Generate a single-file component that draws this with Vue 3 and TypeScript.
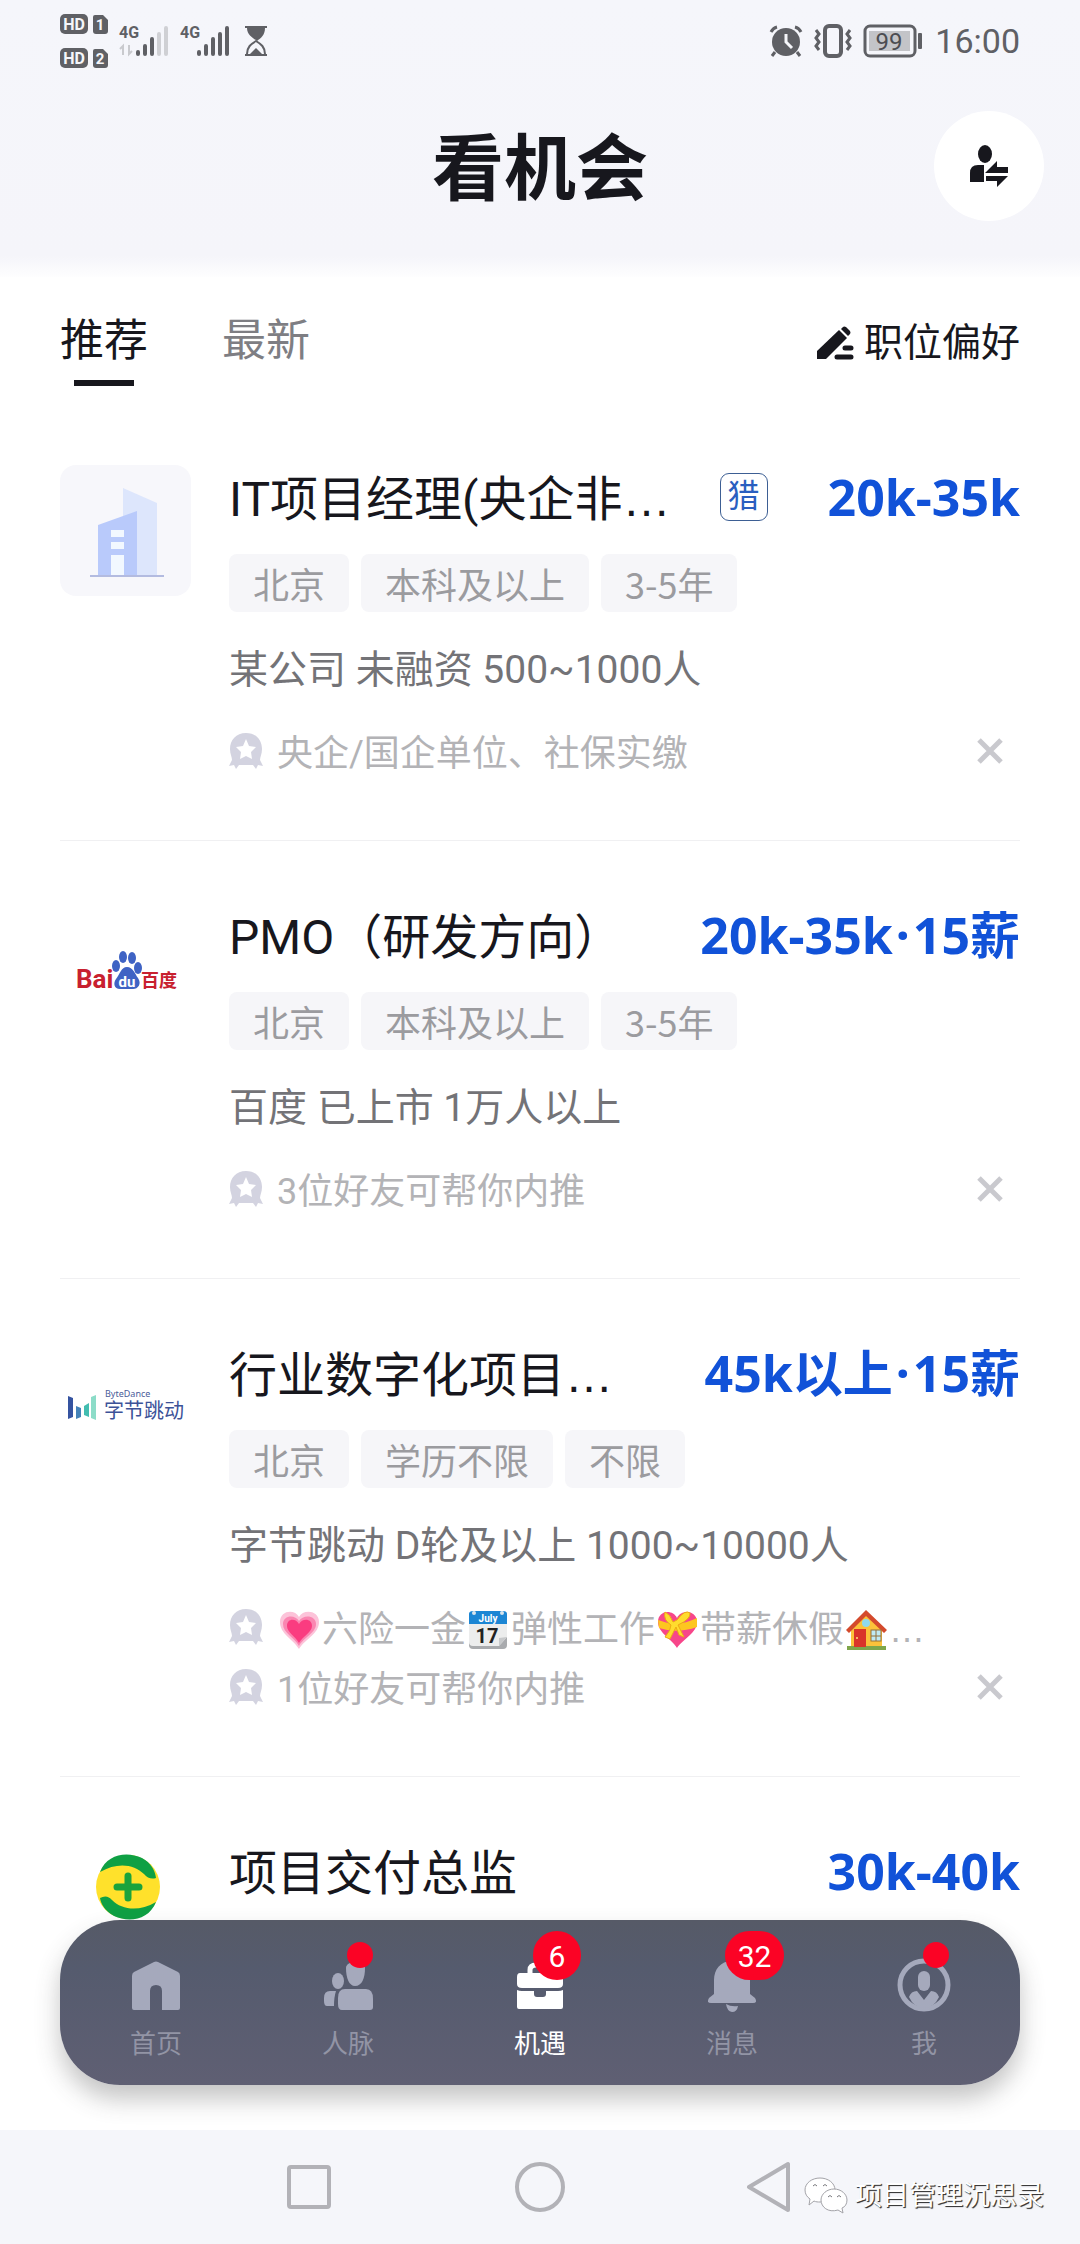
<script setup lang="ts">
type Logo = 'building' | 'baidu' | 'bytedance' | 'plus'
type Emoji = 'heart' | 'calendar' | 'gift' | 'house'
interface Part { text?: string; emoji?: Emoji; dots?: boolean }
interface Job {
  logo: Logo
  title: string
  cut?: boolean
  headhunter?: boolean
  salary: string
  months?: string
  tags: string[]
  company: string
  notes: Part[][]
}
interface NavItem { key: string; label: string; badge?: string; dot?: boolean; active?: boolean }

const jobs: Job[] = [
  {
    logo: 'building', title: 'IT项目经理(央企非', cut: true, headhunter: true, salary: '20k-35k',
    tags: ['北京', '本科及以上', '3-5年'], company: '某公司 未融资 500~1000人',
    notes: [[{ text: '央企/国企单位、社保实缴' }]],
  },
  {
    logo: 'baidu', title: 'PMO（研发方向）', salary: '20k-35k', months: '15薪',
    tags: ['北京', '本科及以上', '3-5年'], company: '百度 已上市 1万人以上',
    notes: [[{ text: '3位好友可帮你内推' }]],
  },
  {
    logo: 'bytedance', title: '行业数字化项目', cut: true, salary: '45k以上', months: '15薪',
    tags: ['北京', '学历不限', '不限'], company: '字节跳动 D轮及以上 1000~10000人',
    notes: [
      [
        { emoji: 'heart' }, { text: '六险一金' }, { emoji: 'calendar' }, { text: '弹性工作' },
        { emoji: 'gift' }, { text: '带薪休假' }, { emoji: 'house' }, { dots: true },
      ],
      [{ text: '1位好友可帮你内推' }],
    ],
  },
  { logo: 'plus', title: '项目交付总监', salary: '30k-40k', tags: [], company: '', notes: [] },
]

const nav: NavItem[] = [
  { key: 'home', label: '首页' },
  { key: 'people', label: '人脉', dot: true },
  { key: 'jobs', label: '机遇', badge: '6', active: true },
  { key: 'bell', label: '消息', badge: '32' },
  { key: 'me', label: '我', dot: true },
]
</script>

<template>
  <div class="page">
    <header class="top">
      <div class="status">
        <div class="status-side">
          <div class="sims">
            <svg v-for="n in 2" :key="n" width="48" height="24" viewBox="0 -2 48 24">
              <rect width="28" height="20" rx="5" fill="#5f6065" />
              <text x="14" y="16" text-anchor="middle" class="glyph" font-size="16" fill="#f5f6fa">HD</text>
              <path d="M35 1H43L48 6V17Q48 20 45 20H36Q33 20 33 17V3Q33 1 35 1Z" fill="#5f6065" />
              <text x="40" y="16" text-anchor="middle" class="glyph" font-size="15" fill="#f5f6fa">{{ n }}</text>
            </svg>
          </div>
          <svg class="signal" width="50" height="40" viewBox="0 -4 50 40">
            <text x="0" y="13" class="glyph" font-size="16" fill="#5f6065">4G</text>
            <path d="M4 30V21L1 24M10 20V29L13 26" fill="none" stroke="#c9cace" stroke-width="2" />
            <g stroke-width="4" stroke-linecap="round">
              <path d="M19 27V29M26 21V29M33 14V29" stroke="#5f6065" />
              <path d="M40 9V29M47 3V29" stroke="#cfd0d4" />
            </g>
          </svg>
          <svg class="signal" width="50" height="40" viewBox="0 -4 50 40">
            <text x="0" y="13" class="glyph" font-size="16" fill="#5f6065">4G</text>
            <path d="M19 27V29M26 21V29M33 14V29M40 9V29M47 3V29" stroke="#5f6065" stroke-width="4" stroke-linecap="round" />
          </svg>
          <svg class="glass" width="24" height="32" viewBox="0 0 24 32">
            <path d="M1 2H23M1 30H23" stroke="#5f6065" stroke-width="2" />
            <path d="M3 3H21C21 10 17 13 13 16C9 13 3 10 3 3Z" fill="#5f6065" />
            <path d="M3 29C3 22 7 19 12 16C17 19 21 22 21 29" fill="none" stroke="#5f6065" stroke-width="2" />
            <path d="M6 29L12 23L18 29Z" fill="#5f6065" />
          </svg>
        </div>
        <div class="status-side">
          <svg width="34" height="32" viewBox="0 0 34 32">
            <circle cx="17" cy="17" r="14" fill="#5f6065" />
            <path d="M2 7Q4 3 8 2M32 7Q30 3 26 2M6 27L3 31M28 27L31 31" stroke="#5f6065" stroke-width="3" fill="none" />
            <path d="M17 9V17L23 23" stroke="#f5f6fa" stroke-width="3" fill="none" />
          </svg>
          <svg class="vibrate" width="38" height="34" viewBox="0 0 38 34">
            <rect x="11" y="2" width="16" height="30" rx="4" fill="none" stroke="#5f6065" stroke-width="4" />
            <path d="M2 6L5 10L2 14L5 18L2 22L5 26M36 6L33 10L36 14L33 18L36 22L33 26" fill="none" stroke="#5f6065" stroke-width="3" />
          </svg>
          <svg width="60" height="34" viewBox="0 0 60 34">
            <rect x="2" y="2" width="50" height="30" rx="5" fill="none" stroke="#5f6065" stroke-width="3" />
            <rect x="6" y="7" width="41" height="20" fill="#c3c4c8" />
            <rect x="55" y="9" width="4" height="16" rx="1" fill="#5f6065" />
            <text x="26" y="26" text-anchor="middle" class="thin" font-size="24" fill="#4c4d52">99</text>
          </svg>
          <span class="clock">16:00</span>
        </div>
      </div>
      <div class="heading">
        <h1>看机会</h1>
        <button class="switch" aria-label="切换身份">
          <svg width="40" height="44" viewBox="0 0 40 44">
            <ellipse cx="16" cy="10" rx="7" ry="9" fill="#17171d" />
            <path d="M1 38V29Q1 21 9 21H15V38Z" fill="#17171d" />
            <path d="M16 29L28 17V23H39V29Z" fill="#17171d" />
            <path d="M17 32H39L28 43V37H17Z" fill="#17171d" />
          </svg>
        </button>
      </div>
    </header>

    <nav class="tabs">
      <button class="tab on">推荐</button>
      <button class="tab">最新</button>
      <button class="prefer">
        <svg width="36" height="34" viewBox="0 0 36 34">
          <path d="M0 33V25L22 4L30 12L9 33Z" fill="#17171d" />
          <path d="M24 3L26 1Q27 0 29 1L33 5Q34 7 33 8L31 10Z" fill="#17171d" />
          <path d="M28 22H34M20 31H34" stroke="#17171d" stroke-width="5" stroke-linecap="round" />
        </svg>
        职位偏好
      </button>
    </nav>

    <main class="list">
      <article v-for="job in jobs" :key="job.title" class="job">
        <div class="tile" :class="{ tinted: job.logo === 'building' }">
          <svg v-if="job.logo === 'building'" width="131" height="131" viewBox="0 0 131 131">
            <path d="M63 23L97 38V111H63Z" fill="#dde6fc" />
            <path d="M38 60L77 46V111H38Z" fill="#b9cafb" />
            <path d="M51 65H64V72H51ZM51 77H64V84H51ZM51 90H64V111H51Z" fill="#f2f8ff" />
            <path d="M30 111H104" stroke="#b3bbe0" stroke-width="2" />
          </svg>
          <svg v-else-if="job.logo === 'baidu'" width="131" height="131" viewBox="0 0 131 131">
            <text x="16" y="85" font-size="26" class="glyph" fill="#c8202f">Bai</text>
            <g fill="#3f63c4">
              <ellipse cx="63" cy="54" rx="4" ry="6" />
              <ellipse cx="72" cy="55" rx="4" ry="6" />
              <ellipse cx="56" cy="63" rx="4" ry="6" />
              <ellipse cx="78" cy="65" rx="4" ry="6" />
              <path d="M67 64C73 64 75 71 78 75C82 81 78 86 73 86H60C54 86 53 80 56 76C60 71 61 64 67 64Z" />
            </g>
            <text x="67" y="84" text-anchor="middle" font-size="15" class="glyph" fill="#ffffff">du</text>
            <text x="81" y="84" font-size="18" class="brand" fill="#c8202f">百度</text>
          </svg>
          <svg v-else-if="job.logo === 'bytedance'" width="131" height="131" viewBox="0 0 131 131">
            <path d="M8 55L13 57V76L8 78Z" fill="#3553a0" />
            <path d="M16 65L21 67V76L16 78Z" fill="#4482b8" />
            <path d="M24 65L29 62V76L24 74Z" fill="#42bdb0" />
            <path d="M31 56L36 54V79L31 77Z" fill="#8cdcc8" />
            <text x="45" y="56" font-size="9" class="latin" fill="#4a5c99">ByteDance</text>
            <text x="44" y="77" font-size="20" class="latin" fill="#3c5298">字节跳动</text>
          </svg>
          <svg v-else width="131" height="131" viewBox="0 0 131 131">
            <circle cx="68" cy="48" r="32" fill="#ffe12b" />
            <path d="M40 33C47 15 67 12 82 19C91 24 95 31 96 39Q89 41 84 35C74 25 57 23 40 33Z" fill="#0fa044" />
            <path d="M96 63C89 81 69 84 54 77C45 72 41 65 40 59Q47 55 52 61C62 71 79 73 96 63Z" fill="#0fa044" />
            <path d="M68 37V59M57 48H79" stroke="#1aa33c" stroke-width="7" stroke-linecap="round" />
          </svg>
        </div>
        <div class="body">
          <div class="row">
            <h2>{{ job.title }}<span v-if="job.cut" class="dots">…</span></h2>
            <span v-if="job.headhunter" class="hunter">猎</span>
            <strong class="salary">{{ job.salary }}<template v-if="job.months"><span class="mid">·</span>{{ job.months }}</template></strong>
          </div>
          <template v-if="job.tags.length">
            <ul class="tags">
              <li v-for="tag in job.tags" :key="tag">{{ tag }}</li>
            </ul>
            <p class="company">{{ job.company }}</p>
            <div class="foot">
              <div class="notes">
                <p v-for="(note, i) in job.notes" :key="i" class="note">
                  <svg class="medal" width="34" height="36" viewBox="0 0 34 36">
                    <path d="M17 0C27 0 33 7 33 16C33 21 31 24 31 27L34 33L29 32L27 36L24 32H10L7 36L5 32L0 33L3 27C3 24 1 21 1 16C1 7 7 0 17 0Z" fill="#d3d3e0" />
                    <path d="M17 6L20 13L27 14L22 19L23 26L17 23L11 26L12 19L7 14L14 13Z" fill="#ffffff" />
                  </svg>
                  <template v-for="(part, j) in note" :key="j">
                    <span v-if="part.text">{{ part.text }}</span>
                    <span v-else-if="part.dots" class="dots">…</span>
                    <svg v-else class="emoji" width="41" height="40" viewBox="0 0 41 40" role="img">
                      <g v-if="part.emoji === 'heart'">
                        <path d="M20 39C14 29 1 24 1 12C1 0 16 -1 20 7C24 -1 40 0 40 12C40 24 26 29 20 39Z" fill="#fcc3d9" />
                        <path d="M20 36C15 27 4 23 4 14C4 5 16 4 20 11C24 4 37 5 37 14C37 23 25 27 20 36Z" fill="#fa86b1" />
                        <path d="M20 33C16 26 8 22 8 16C8 8 17 8 20 14C23 8 33 8 33 16C33 22 24 26 20 33Z" fill="#fa3c80" />
                      </g>
                      <g v-else-if="part.emoji === 'calendar'">
                        <rect x="1" y="2" width="38" height="37" rx="4" fill="#a9abae" />
                        <path d="M1 14H39V27L31 36H5Q1 36 1 32Z" fill="#eceded" />
                        <path d="M39 27L31 36V28Z" fill="#c7c9cb" />
                        <path d="M1 14V4Q1 1 5 1H35Q39 1 39 4V14Z" fill="#1c86d4" />
                        <circle cx="6" cy="3" r="2" fill="#d8e4ec" />
                        <circle cx="34" cy="3" r="2" fill="#d8e4ec" />
                        <text x="20" y="12" text-anchor="middle" font-size="10" class="glyph" fill="#ffffff">July</text>
                        <text x="19" y="33" text-anchor="middle" font-size="20" class="glyph" fill="#222222">17</text>
                      </g>
                      <g v-else-if="part.emoji === 'gift'">
                        <path d="M20 38C15 29 1 23 1 12C1 0 16 -1 20 8C24 -1 40 0 40 12C40 23 26 29 20 38Z" fill="#f7468a" />
                        <path d="M1 10Q20 18 40 8V17Q20 24 2 18Z" fill="#fdc61f" />
                        <path d="M8 2Q13 4 16 12L20 10Q28 -1 33 3Q34 9 21 15L27 27L22 25L19 17L13 29L8 27Q14 20 14 15Q6 10 8 2Z" fill="#ffdc2e" stroke="#eda915" stroke-width="1" />
                      </g>
                      <g v-else>
                        <path d="M5 17L20 3L36 17V37H5Z" fill="#fcc23a" />
                        <path d="M20 0L41 20L38 23L20 6L3 23L0 20Z" fill="#d44a2c" />
                        <path d="M1 36H40V40H1Z" fill="#7ea64b" />
                        <rect x="8" y="19" width="12" height="18" fill="#d9342a" />
                        <rect x="25" y="20" width="10" height="11" fill="#bfeaf5" stroke="#94713a" stroke-width="1" />
                        <path d="M30 20V31M25 26H35" stroke="#94713a" stroke-width="1" />
                        <circle cx="20" cy="13" r="4" fill="#8fd9ee" />
                        <circle cx="11" cy="28" r="1" fill="#ffe27a" />
                      </g>
                    </svg>
                  </template>
                </p>
              </div>
              <button class="close" aria-label="不感兴趣">
                <svg width="26" height="26" viewBox="0 0 26 26">
                  <path d="M2 2L24 24M24 2L2 24" stroke="#c9c9ce" stroke-width="5" />
                </svg>
              </button>
            </div>
          </template>
        </div>
      </article>
    </main>

    <nav class="dock">
      <a v-for="item in nav" :key="item.key" href="#" class="item" :class="{ active: item.active }">
        <span class="icon">
          <svg width="54" height="54" viewBox="0 0 54 54" fill="currentColor">
            <path v-if="item.key === 'home'" d="M25 4Q27 3 29 4L49 14Q51 15 51 18V50Q51 52 49 52H33V33Q33 27 27 27Q21 27 21 33V52H5Q3 52 3 50V18Q3 15 5 14Z" />
            <g v-else-if="item.key === 'people'">
              <path d="M25 10C25 2 44 2 44 10C44 20 41 28 34 28C28 28 25 20 25 10Z" />
              <ellipse cx="17" cy="23" rx="6" ry="8" />
              <path d="M24 31H45Q52 31 52 41V49Q52 52 49 52H21Q17 52 17 46V40Q17 31 24 31Z" />
              <path d="M9 33H15Q13 39 13 48H6Q3 48 3 43V40Q3 33 9 33Z" />
            </g>
            <g v-else-if="item.key === 'jobs'">
              <path d="M17 16V12Q17 7 23 7H32Q38 7 38 12V16" fill="none" stroke="currentColor" stroke-width="5" />
              <path d="M7 15H46Q50 15 50 19V26Q50 30 45 30H9Q4 30 4 26V19Q4 15 7 15Z" />
              <path d="M4 32Q6 33 9 33H21V36Q21 39 24 39H30Q33 39 33 36V33H45Q48 33 50 32V49Q50 51 48 51H6Q4 51 4 49Z" />
            </g>
            <g v-else-if="item.key === 'bell'">
              <path d="M27 3C39 3 45 12 45 22V36L50 40Q53 45 48 45H6Q1 45 4 40L9 36V22C9 12 15 3 27 3Z" />
              <path d="M21 46Q26 49 33 48Q32 54 27 54Q22 53 21 46Z" />
            </g>
            <g v-else>
              <circle cx="27" cy="27" r="24" fill="none" stroke="currentColor" stroke-width="5" />
              <rect x="21" y="13" width="12" height="20" rx="6" />
              <path d="M12 39Q14 33 20 33L27 42L34 33Q40 33 42 39Q37 50 27 50Q17 50 12 39Z" />
            </g>
          </svg>
          <b v-if="item.badge" class="badge" :class="{ wide: item.badge.length > 1 }">{{ item.badge }}</b>
          <i v-if="item.dot" class="dot"></i>
        </span>
        <span>{{ item.label }}</span>
      </a>
    </nav>

    <footer class="system">
      <button aria-label="最近任务">
        <svg width="52" height="52" viewBox="0 0 52 52"><rect x="5" y="6" width="40" height="40" rx="2" /></svg>
      </button>
      <button aria-label="主屏幕">
        <svg width="52" height="52" viewBox="0 0 52 52"><circle cx="26" cy="26" r="23" /></svg>
      </button>
      <button aria-label="返回">
        <svg width="52" height="52" viewBox="0 0 52 52"><path d="M44 3V49L5 26Z" stroke-linejoin="round" /></svg>
      </button>
      <div class="mark">
        <svg width="44" height="38" viewBox="0 0 44 38">
          <g fill="#ffffff" stroke="#a3a3a8" stroke-width="1">
            <path d="M16 1C24 1 31 6 31 13C31 20 24 25 16 25C14 25 12 25 10 24L5 28L6 22C3 20 1 17 1 13C1 6 8 1 16 1Z" />
            <path d="M30 12C37 12 43 17 43 23C43 27 41 30 38 31L39 36L34 33C24 36 17 30 17 23C17 17 23 12 30 12Z" />
          </g>
          <path d="M9 9Q11 6 13 9M19 9Q21 6 23 9M24 20Q26 17 28 20M33 20Q35 17 37 20" fill="none" stroke="#77777c" stroke-width="1" />
        </svg>
        项目管理沉思录
      </div>
    </footer>
  </div>
</template>

<style>
body {
  margin: 0;
  background: #ffffff;
}
</style>

<style scoped>
.page {
  position: relative;
  display: flex;
  flex-direction: column;
  height: 100vh;
  overflow: hidden;
  background: #ffffff;
  color: #17171d;
  font-family: Roboto, "Noto Sans CJK SC", sans-serif;
}
.page * {
  box-sizing: border-box;
}
svg {
  display: block;
  flex: none;
  overflow: visible;
}
button {
  display: flex;
  align-items: center;
  justify-content: center;
  padding: 0;
  border: 0;
  background: none;
  color: inherit;
  font: inherit;
}
h1, h2, p, ul {
  margin: 0;
  padding: 0;
}
.glyph {
  font-family: Roboto, sans-serif;
  font-weight: 700;
}
.thin {
  font-family: Roboto, sans-serif;
}
.brand {
  font-family: "Noto Sans", "Noto Sans CJK SC", sans-serif;
  font-weight: 700;
}
.latin {
  font-family: "Noto Sans", "Noto Sans CJK SC", sans-serif;
}
.top {
  flex: none;
  padding: 14px 36px 56px 60px;
  background: linear-gradient(#f5f6fb 0, #f5f5fa 256px, #ffffff 280px);
}
.status {
  display: flex;
  justify-content: space-between;
  padding-right: 24px;
}
.status-side {
  display: flex;
  align-items: center;
  height: 54px;
}
.sims {
  display: flex;
  flex-direction: column;
  gap: 10px;
  margin-right: 11px;
}
.signal {
  margin-right: 11px;
}
.glass {
  margin-left: 3px;
}
.vibrate {
  margin: 0 11px;
}
.clock {
  margin-left: 12px;
  color: #5f6065;
  font-size: 34px;
  line-height: 40px;
}
.heading {
  display: grid;
  grid-template-columns: 110px 1fr 110px;
  align-items: center;
  margin-top: 43px;
  margin-left: -24px;
}
h1 {
  grid-column: 2;
  padding-top: 8px;
  font-size: 72px;
  line-height: 102px;
  font-weight: 700;
  text-align: center;
}
.switch {
  height: 110px;
  border-radius: 50%;
  background: #ffffff;
}
.tabs {
  display: flex;
  flex: none;
  align-items: flex-start;
  gap: 74px;
  padding: 34px 60px 0;
  height: 126px;
}
.tab {
  flex-direction: column;
  color: #7e7e83;
  font-size: 44px;
  line-height: 60px;
}
.tab.on {
  color: #17171d;
}
.tab.on::after {
  content: "";
  width: 60px;
  height: 6px;
  margin-top: 9px;
  background: #17171d;
}
.prefer {
  gap: 11px;
  margin-left: auto;
  font-size: 39px;
  line-height: 64px;
}
.list {
  flex: 1;
  min-height: 0;
  padding: 0 60px;
  overflow: hidden;
}
.job {
  display: flex;
  gap: 38px;
  padding: 62px 0 56px;
  border-bottom: 1px solid #f0f0f2;
}
.tile {
  flex: none;
  width: 131px;
  height: 131px;
  border-radius: 16px;
}
.tinted {
  background: #f7f7fb;
}
.body {
  flex: 1;
  min-width: 0;
}
.row {
  display: flex;
  align-items: flex-start;
  height: 70px;
}
h2 {
  font-size: 48px;
  line-height: 70px;
  font-weight: 400;
  white-space: nowrap;
}
.dots {
  font-family: "Liberation Sans", sans-serif;
}
.hunter {
  width: 48px;
  height: 48px;
  margin: 8px 60px 0 auto;
  border: 1px solid #3d5f94;
  border-radius: 9px;
  color: #2a5fc0;
  font-size: 32px;
  line-height: 45px;
  text-align: center;
}
.salary {
  color: #1152d8;
  font-family: "Noto Sans", "Noto Sans CJK SC", sans-serif;
  font-size: 50px;
  line-height: 64px;
  font-weight: 700;
  white-space: nowrap;
}
.mid {
  margin: 0 3px;
}
h2 + .salary {
  margin-left: auto;
}
.tags {
  display: flex;
  gap: 12px;
  margin-top: 19px;
  list-style: none;
}
.tags li {
  padding: 0 24px;
  border-radius: 8px;
  background: #f6f6f9;
  color: #9b9b9f;
  font-family: "Noto Sans CJK SC", sans-serif;
  font-size: 36px;
  line-height: 58px;
}
.company {
  margin-top: 34px;
  color: #737377;
  font-size: 39px;
  line-height: 48px;
}
.foot {
  display: flex;
  align-items: flex-end;
  justify-content: space-between;
  margin-top: 30px;
}
.note {
  display: flex;
  align-items: center;
  height: 60px;
  color: #b3b3b6;
  font-size: 36px;
  line-height: 60px;
  white-space: nowrap;
}
.medal {
  margin: 0 14px 6px 0;
}
.emoji {
  margin: 0 2px;
}
.close {
  width: 60px;
  height: 60px;
  padding-bottom: 6px;
}
.dock {
  position: absolute;
  right: 60px;
  bottom: 159px;
  left: 60px;
  display: flex;
  height: 165px;
  border-radius: 60px;
  background: linear-gradient(#565a67, #555b6e 30%, #5f5f73);
  box-shadow: 0 14px 24px rgba(60, 60, 60, 0.3);
}
.item {
  display: flex;
  flex: 1;
  flex-direction: column;
  align-items: center;
  gap: 14px;
  padding-top: 38px;
  color: #9294a5;
  font-size: 26px;
  line-height: 36px;
  text-decoration: none;
}
.icon {
  position: relative;
  color: #a5a9bc;
}
.active,
.active .icon {
  color: #ffffff;
}
.badge {
  position: absolute;
  top: -27px;
  left: 20px;
  width: 48px;
  height: 49px;
  border-radius: 25px;
  background: #fb0325;
  color: #ffffff;
  font-size: 30px;
  line-height: 52px;
  font-weight: 400;
  text-align: center;
}
.badge.wide {
  width: 59px;
}
.dot {
  position: absolute;
  top: -16px;
  left: 26px;
  width: 26px;
  height: 26px;
  border-radius: 50%;
  background: #fb0325;
}
.system {
  position: relative;
  display: flex;
  flex: none;
  align-items: center;
  justify-content: center;
  gap: 178px;
  height: 114px;
  background: #f5f6fa;
}
.system button svg {
  fill: none;
  stroke: #b2b2b7;
  stroke-width: 4;
}
.mark {
  position: absolute;
  right: 36px;
  bottom: 29px;
  display: flex;
  align-items: center;
  gap: 7px;
  color: #ffffff;
  font-size: 27px;
  line-height: 38px;
  text-shadow: 1px 1px 1px #333333, 1px 1px 0 #77777c;
}
</style>
